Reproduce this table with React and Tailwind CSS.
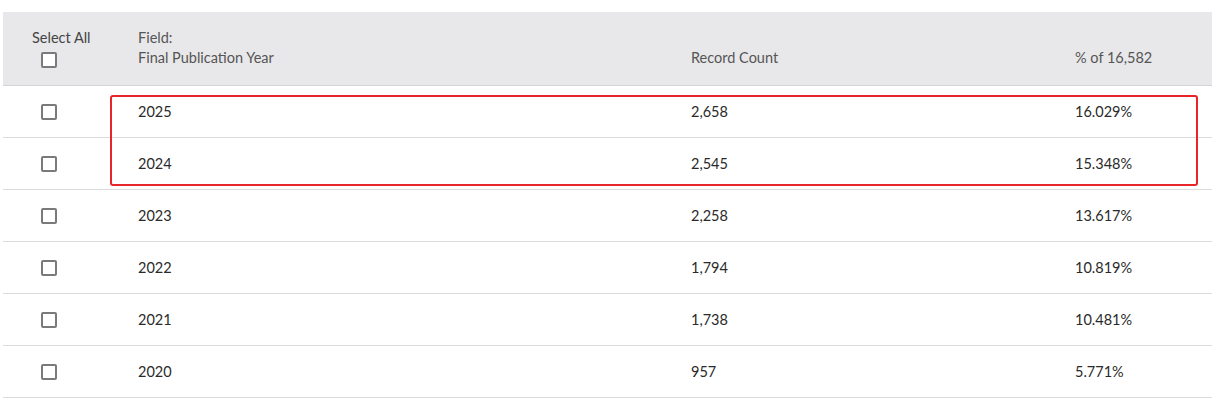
const rows = [
  { year: '2025', count: '2,658', pct: '16.029%' },
  { year: '2024', count: '2,545', pct: '15.348%' },
  { year: '2023', count: '2,258', pct: '13.617%' },
  { year: '2022', count: '1,794', pct: '10.819%' },
  { year: '2021', count: '1,738', pct: '10.481%' },
  { year: '2020', count: '957', pct: '5.771%' },
];

function Box() {
  return <span className="block w-[16px] h-[16px] border-2 border-[#7a7a7a] rounded-[2px] bg-white" />;
}

export default function App() {
  return (
    <div className="w-[1212px] h-[399px] bg-white pt-[12px] pl-[3px] overflow-hidden" style={{ fontFamily: 'Lato, "Liberation Sans", sans-serif' }}>
      <div className="relative">
        {/* header */}
        <div className="grid grid-cols-[135px_553px_384px_1fr] bg-[#e8e8ea] border-b border-[#d4d4d6] h-[74px] text-[14.5px] leading-[20px] text-[#555]">
          <div className="pl-[29px] pt-[16px] text-[#444]">
            <div>Select All</div>
            <div className="pl-[9px] pt-[4px]"><Box /></div>
          </div>
          <div className="pt-[16px] text-[#555]">
            <div>Field:</div>
            <div>Final Publication Year</div>
          </div>
          <div className="pt-[36px]">Record Count</div>
          <div className="pt-[36px]">% of 16,582</div>
        </div>

        {/* rows */}
        {rows.map((r) => (
          <div key={r.year} className="grid grid-cols-[135px_553px_384px_1fr] items-center h-[52px] border-b border-[#dcdcdc] text-[14.5px] text-[#2a2a2a]">
            <div className="pl-[38px]"><Box /></div>
            <div>{r.year}</div>
            <div>{r.count}</div>
            <div>{r.pct}</div>
          </div>
        ))}

        {/* highlight annotation */}
        <div className="absolute left-[107px] top-[83px] w-[1088px] h-[91px] border-2 border-[#e8262a] rounded-[3px] pointer-events-none" />
      </div>
    </div>
  );
}
